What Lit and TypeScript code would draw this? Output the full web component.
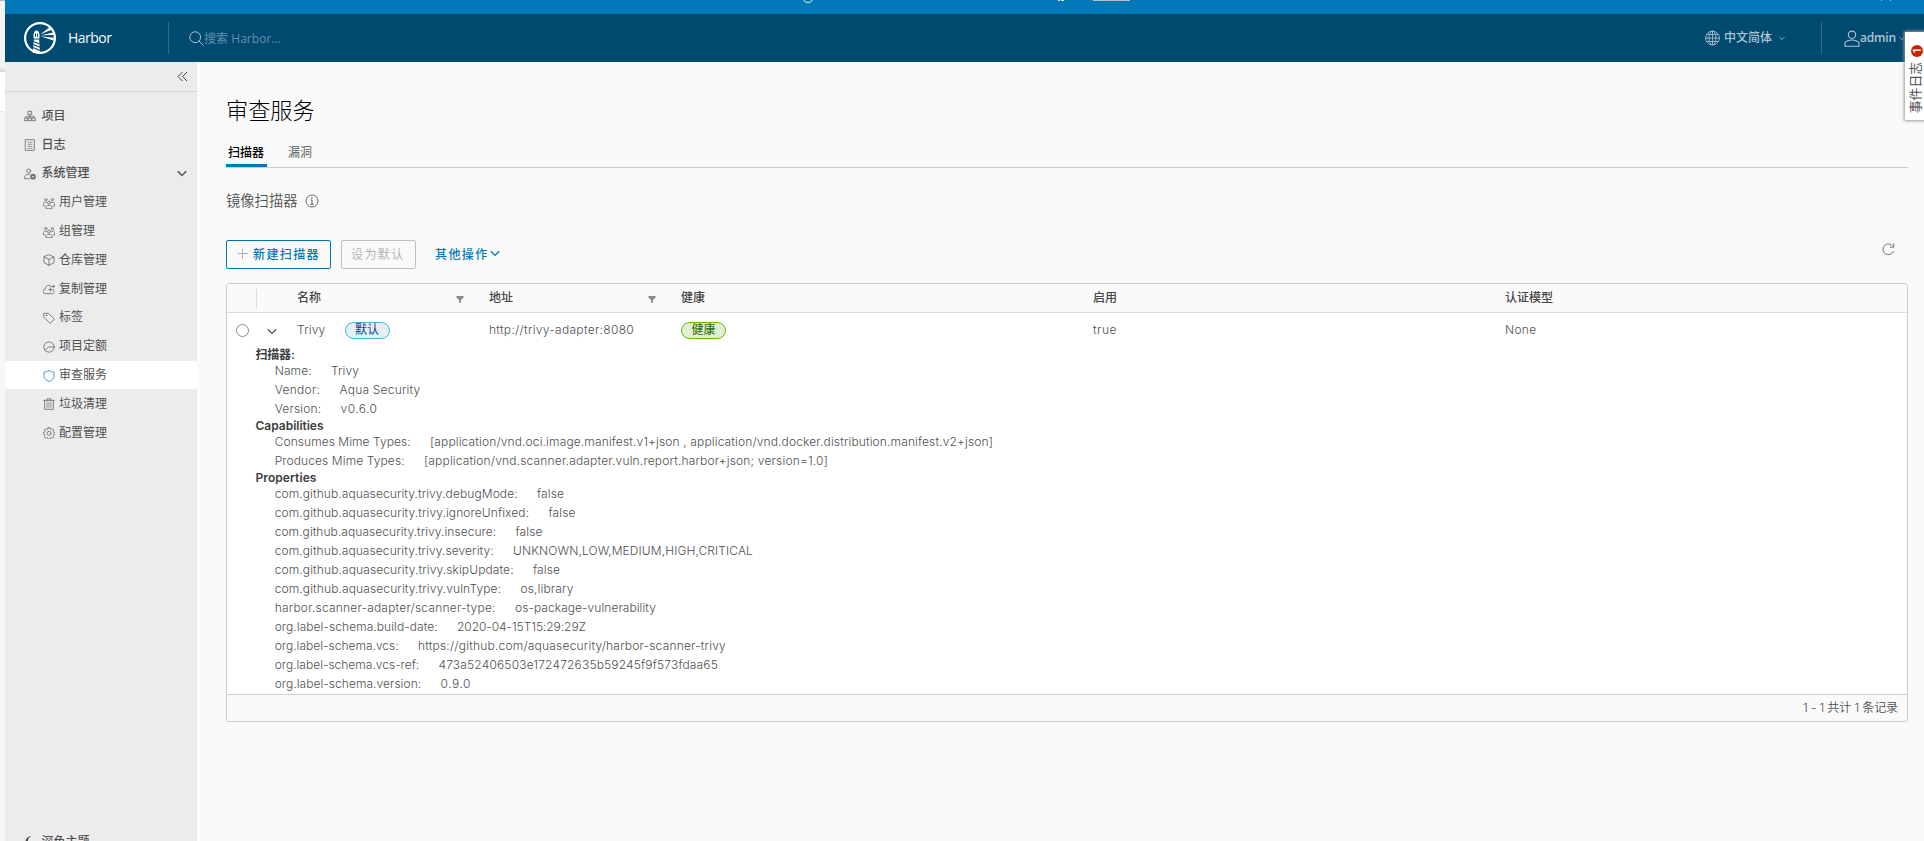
import { LitElement, html, css, svg } from "lit";
import { customElement, property } from "lit/decorators.js";

/** A single line of text whose tracking is tuned to a given advance width. */
@customElement("fit-text")
class FitText extends LitElement {
  @property({ type: Number }) w = 0;
  @property() text = "";
  static styles = css`
    :host { display: inline-block; white-space: pre; flex: none; }
    span { display: inline-block; }
  `;
  async firstUpdated() {
    await document.fonts.ready;
    const s = this.renderRoot.querySelector("span") as HTMLElement;
    const n = this.text.length;
    const natural = s.getBoundingClientRect().width;
    if (this.w && n) s.style.letterSpacing = (this.w - natural) / n + "px";
    if (this.w) this.style.width = this.w + "px";
  }
  render() {
    return html`<span>${this.text}</span>`;
  }
}

const icon = (body: unknown, size = 12) =>
  html`<svg width=${size} height=${size} viewBox="0 0 36 36" fill="none" stroke="currentColor" stroke-width="2.600" stroke-linejoin="round" stroke-linecap="round">${body}</svg>`;

const icons: Record<string, unknown> = {
  org: svg`<path d="M13 4h10v9H13zM2 24h9v8H2zM25 24h9v8h-9zM13.500 24h9v8h-9zM18 13v11M6 24v-5h24v5"/>`,
  log: svg`<path d="M5 2h26v32H5z"/><path d="M12 10h12M12 16h12M12 22h12M12 28h12" stroke-width="2"/>`,
  admin: svg`<circle cx="14" cy="9" r="6"/><path d="M16 32H2v-7c3-5 8-6 14-6"/><circle cx="27" cy="26" r="5.500" stroke-width="6"/>`,
  users: svg`<circle cx="18" cy="17" r="4.500"/><path d="M9 34v-5c2-3 5-4 9-4s7 1 9 4v5z"/><circle cx="8" cy="8" r="3.500"/><circle cx="28" cy="8" r="3.500"/><path d="M5 27H1v-8c2-3 5-4 9-3M31 27h4v-8c-2-3-5-4-9-3"/>`,
  box: svg`<path d="M18 2.500l15 6.500v17l-15 8-15-8V9zM3 9l15 7 15-7M18 16v18"/>`,
  cloud: svg`<path d="M24 10A10 10 0 0 0 7 18a7 7 0 0 0 1 14h20a6 6 0 0 0 5-8M17 20h14M22 15v10M24 10h11M31 6l4 4-4 4"/>`,
  tag: svg`<path d="M3 4h13l18 17-12 13L3 16z"/><circle cx="10" cy="10" r="1.500"/>`,
  quota: svg`<circle cx="18" cy="18" r="15.500"/><path d="M6 28l11-10h16"/>`,
  shield: svg`<path d="M18 1c4 4 9 5 15 5v12c0 8-7 13-15 17C10 31 3 26 3 18V6c6 0 11-1 15-5z"/>`,
  trash: svg`<path d="M2 7h32M12 7V2.500h12V7M5 7v27h26V7"/><path d="M12 12v17M18 12v17M24 12v17" stroke-width="2"/>`,
  cog: svg`<path d="M15.200 2h5.600l1 4.300 3 1.200 3.700-2.300 4 4-2.300 3.700 1.200 3 4.300 1v5l-4.300 1-1.200 3 2.300 3.700-4 4-3.700-2.300-3 1.200-1 4.300h-5.600l-1-4.300-3-1.200-3.700 2.300-4-4 2.300-3.700-1.200-3-4.300-1v-5l4.300-1 1.200-3-2.300-3.700 4-4 3.700 2.300 3-1.200z"/><circle cx="18" cy="19" r="6"/>`,
};

const nav: { t: string; i: string; sub?: boolean; active?: boolean; open?: boolean }[] = [
  { t: "项目", i: "org" },
  { t: "日志", i: "log" },
  { t: "系统管理", i: "admin", open: true },
  { t: "用户管理", i: "users", sub: true },
  { t: "组管理", i: "users", sub: true },
  { t: "仓库管理", i: "box", sub: true },
  { t: "复制管理", i: "cloud", sub: true },
  { t: "标签", i: "tag", sub: true },
  { t: "项目定额", i: "quota", sub: true },
  { t: "审查服务", i: "shield", sub: true, active: true },
  { t: "垃圾清理", i: "trash", sub: true },
  { t: "配置管理", i: "cog", sub: true },
];

type Row = [string, number, string, number];
const sections: { title: string; w: number; rows: Row[] }[] = [
  { title: "扫描器:", w: 39, rows: [
    ["Name:", 37, "Trivy", 28],
    ["Vendor:", 45.5, "Aqua Security", 81],
    ["Version:", 46.5, "v0.6.0", 37],
  ] },
  { title: "Capabilities", w: 68, rows: [
    ["Consumes Mime Types:", 136, "[application/vnd.oci.image.manifest.v1+json , application/vnd.docker.distribution.manifest.v2+json]", 563],
    ["Produces Mime Types:", 130, "[application/vnd.scanner.adapter.vuln.report.harbor+json; version=1.0]", 404],
  ] },
  { title: "Properties", w: 61, rows: [
    ["com.github.aquasecurity.trivy.debugMode:", 243, "false", 27],
    ["com.github.aquasecurity.trivy.ignoreUnfixed:", 254.5, "false", 27],
    ["com.github.aquasecurity.trivy.insecure:", 221.5, "false", 27],
    ["com.github.aquasecurity.trivy.severity:", 219, "UNKNOWN,LOW,MEDIUM,HIGH,CRITICAL", 240],
    ["com.github.aquasecurity.trivy.skipUpdate:", 239, "false", 27],
    ["com.github.aquasecurity.trivy.vulnType:", 226.5, "os,library", 53],
    ["harbor.scanner-adapter/scanner-type:", 221, "os-package-vulnerability", 141],
    ["org.label-schema.build-date:", 163, "2020-04-15T15:29:29Z", 129],
    ["org.label-schema.vcs:", 124, "https://github.com/aquasecurity/harbor-scanner-trivy", 308],
    ["org.label-schema.vcs-ref:", 144.5, "473a52406503e172472635b59245f9f573fdaa65", 279.5],
    ["org.label-schema.version:", 146.5, "0.9.0", 30.5],
  ] },
];

@customElement("app-root")
class AppRoot extends LitElement {
  static styles = css`
    :host { display: flex; height: 841px; width: 1924px; overflow: hidden; position: relative; background: #fafafa;
      font: 350 12px/18px Inter, "Noto Sans CJK SC", sans-serif; color: #505050; }
    * { box-sizing: border-box; }
    svg { display: block; flex: none; }
    .edge { width: 5px; flex: none; display: flex; flex-direction: column; background: #f6f6f6; }
    .edge .a { height: 1px; background: #b5b5b5; }
    .edge .b { height: 71px; background: linear-gradient(#f3f3f3 92%, #d4d4d4); }
    .edge .c { height: 40px; background: #fff; border-bottom: 1px solid #e8e8e8; }
    .app { flex: 1; display: flex; flex-direction: column; min-width: 0; }
    .banner { height: 14px; flex: none; background: #0079b8; display: flex; overflow: hidden; }
    .ring { width: 12px; height: 12px; margin: -9px 0 0 797px; border: 1px solid #e8f4fb; border-radius: 50%; }
    .bit { width: 6px; height: 1px; margin-left: 244px; border-left: 2px solid #cbe4f2; border-right: 3px solid #fff; }
    .under { width: 37px; height: 1px; margin-left: 29px; background: #b6bcc0; }
    .bit2 { width: 10px; height: 1px; margin-left: 751px; border-left: 1px solid #9bcbe5; border-right: 1px solid #9bcbe5; }
    .head { height: 48px; flex: none; background: #004a70; color: #afc4d1; display: flex; align-items: center; font-family: "Open Sans", "Noto Sans CJK SC", sans-serif; }
    .logo { margin-left: 19px; }
    .brand { color: #fafafa; font-size: 14px; margin-left: 12px; width: 100px; margin-top: -1px; font-weight: 400; }
    .div { width: 1px; height: 32px; background: #2f6d8e; }
    .mag { margin-left: 20px; }
    .search { color: #6190a9; margin: 1px 0 0; font-weight: 400; }
    .grow { flex: 1; }
    .lang { margin: -1px 7px 0 4px; font-weight: 500; font-size: 12px; }
    .ldiv { margin: 0 22px 0 36px; }
    .adm { font-weight: 600; margin: -1px 3px 0 0; }
    .tail { margin-right: 19px; }
    .main { flex: 1; display: flex; min-height: 0; }
    .side { width: 192px; flex: none; background: #ececec; display: flex; flex-direction: column; overflow: hidden; }
    .fold { height: 30px; flex: none; border-bottom: 1px solid #d6d6d6; display: flex; justify-content: flex-end; padding: 9px 9px 0 0; }
    .nav { padding-top: 9.500px; height: 735.500px; flex: none; }
    .item { height: 28.8px; flex: none; display: flex; align-items: center; padding-left: 19px; gap: 6px; font-weight: 500; color: #505050; }
    .item svg { color: #707070; margin-top: 1px; }
    .item .t { flex: 1; margin-left: -0.500px; }
    .item .chev { margin-right: 10px; color: #444; }
    .sub { padding-left: 37.500px; font-weight: 400; gap: 5px; }
    .active { background: #fff; border-radius: 3px; }
    .active svg { color: #3492c6; }
    .content { flex: 1; display: flex; flex-direction: column; padding: 29px 16px 0 29px; min-width: 0; }
    h1 { margin: 0; font: 300 22.200px/36px "Noto Sans CJK SC", sans-serif; color: #000; }
    .tabs { display: flex; height: 30px; margin-top: 11px; border-bottom: 1px solid #ccc; }
    .tab { padding: 6px 2px 0; height: 29px; margin-right: 19px; color: #565656; }
    .tab.on { color: #000; font-weight: 500; width: 41px; border-bottom: 3px solid #0079b8; }
    .sub-h { display: flex; align-items: center; height: 20px; margin-top: 23px; font-size: 14.300px; gap: 8px; font-weight: 350; }
    .bar { display: flex; align-items: center; height: 29px; margin-top: 29px; letter-spacing: 1.400px; }
    .btn { height: 29px; border: 1px solid #0079b8; color: #0079b8; border-radius: 2px; display: flex; align-items: center; font-weight: 500; }
    .new { width: 105px; padding-left: 11px; gap: 5px; }
    .new svg { margin-top: -2px; }
    .dis { width: 75px; margin-left: 10px; border-color: #c1c1c1; color: #b4b4b4; padding-left: 9px; font-weight: 400; }
    .more { color: #0079b8; margin-left: 19px; font-weight: 500; display: flex; align-items: center; gap: 1.500px; }
    .more svg { margin-top: -2px; }
    .bar .ref { margin: -10px 13px 0 0; color: #737373; }
    .table { margin-top: 14px; border: 1px solid #ccc; border-radius: 3px; height: 439px; background: #fff; display: flex; flex-direction: column; }
    .r { display: grid; grid-template-columns: 29px 41px 192px 192px 412px 412px 1fr; align-items: center; flex: none; }
    .th { height: 29px; background: #fafafa; border-bottom: 1px solid #ddd; font-weight: 500; color: #454545; border-radius: 3px 3px 0 0; }
    .sep { height: 19px; border-right: 1px solid #ddd; width: 30px; }
    .col { display: flex; align-items: center; justify-content: space-between; }
    .col svg { margin: 2px 25px 0 0; }
    .tr { height: 34px; }
    .radio { width: 13px; height: 13px; border: 1px solid #8c8c8c; border-radius: 50%; margin: 1px 0 0 9px; }
    .tr .chev { margin: 2px 0 0 11px; }
    .tag { height: 17px; width: 45px; margin-top: 1px; border: 1px solid #49afd9; background: #e1f1f6; color: #004d8a; border-radius: 9px; line-height: 14px; text-align: center; font-weight: 400; }
    .ok { background: #dff0d0; border-color: #60b515; color: #266900; }
    .name { display: flex; align-items: center; gap: 19px; }
    .detail { flex: 1; min-height: 0; padding-left: 28.500px; }
    .title { font-weight: 600; color: #3d3d3d; height: 14px; line-height: 15px; display: flex; }
    .rows { padding: 0 0 0 19.200px; }
    .kv { display: flex; height: 19px; line-height: 19px; gap: 19.300px; }
    .foot { height: 27px; flex: none; border-top: 1px solid #ccc; background: #fafafa; border-radius: 0 0 3px 3px; display: flex; align-items: center; justify-content: flex-end; padding-right: 9px; }
    .event { position: absolute; left: 1905px; top: 32px; width: 24px; height: 88px; background: #fff; box-shadow: 0 0 3px 1px #999; display: flex; flex-direction: column; align-items: flex-start; padding: 13px 0 0 6px; gap: 5px; }
    .event div { writing-mode: vertical-rl; text-orientation: sideways; transform: rotate(180deg); }
    .event .badge { width: 12px; height: 12px; border-radius: 50%; background: #c92100; color: #fff; font-weight: 600; font-size: 10px; line-height: 12px; text-align: center; }
    .event .n { width: 14px; line-height: 14px; font-size: 12.800px; margin-left: -2px; font-weight: 400; }
  `;

  chev(w: number, cls = "chev") {
    return html`<svg class=${cls} width=${w} height="7" viewBox="0 0 10 7" fill="none" stroke="currentColor" stroke-width="1.300"><path d="M.8 1.200L5 5.400 9.200 1.200"/></svg>`;
  }
  filter() {
    return html`<svg width="8" height="7" viewBox="0 0 8 7" fill="#8c8c8c"><path d="M.5 0h7v1.800L5 4v2.800H3V4L.5 1.800z"/></svg>`;
  }

  render() {
    return html`
      <div class="edge"><div class="a"></div><div class="b"></div><div class="c"></div></div>
      <div class="app">
        <div class="banner"><div class="ring"></div><div class="bit"></div><div class="under"></div><div class="bit2"></div></div>
        <div class="head">
          <svg class="logo" width="32" height="32" viewBox="0 0 32 32">
            <circle cx="16" cy="16" r="14.900" fill="none" stroke="#fff" stroke-width="2.200"/>
            <path fill="#fff" d="M9.500 12.500l.8-2.800 2.200-1.700 2.200 1.700.8 2.800v4h-6z"/>
            <path fill="#004a70" d="M11 11.500h1v3.300h-1zM13 11.500h1v3.300h-1z"/>
            <path fill="#fff" d="M9.900 17.500h5.200l1 13.500H8.700z"/>
            <path stroke="#004a70" stroke-width="1.100" d="M9.500 19.500l6 2.500M9 22.500l7 2.800M9 25.500l7 3"/>
            <path fill="#fff" d="M16.500 12.300l9-7 2.200 2.400zM16.500 13.200l13-2.800.5 2.600zM16.500 14.200l13.500 1.600-.6 2.700z"/>
          </svg>
          <div class="brand"><fit-text w="43.500" text="Harbor"></fit-text></div>
          <div class="div"></div>
          <svg class="mag" width="15" height="15" viewBox="0 0 15 15" fill="none" stroke="currentColor" stroke-width="1"><circle cx="6.200" cy="6.200" r="5.400"/><path d="M10.200 10.200l4.300 4.300"/></svg>
          <div class="search"><fit-text w="77" text="搜索 Harbor..."></fit-text></div>
          <div class="grow"></div>
          <svg width="15" height="16" viewBox="0 0 16 16" fill="none" stroke="currentColor" stroke-width=".9"><circle cx="8" cy="8" r="7.400"/><ellipse cx="8" cy="8" rx="3.700" ry="7.400"/><path d="M8 .8v14.400M.8 8h14.400M2 4.300h12M2 11.700h12"/></svg>
          <div class="lang">中文简体</div>
          ${this.chev(6)}
          <div class="div ldiv"></div>
          <svg width="16" height="17" viewBox="0 0 16 17" fill="none" stroke="currentColor" stroke-width="1.100"><circle cx="8" cy="4.800" r="3.700"/><path d="M1 16.300v-3.500c1.500-2.200 4-2.800 7-2.800s5.500.6 7 2.800v3.500z"/></svg>
          <div class="adm"><fit-text w="36" text="admin"></fit-text></div>
          ${this.chev(6, "tail")}
        </div>
        <div class="main">
          <div class="side">
            <div class="fold"><svg width="11" height="11" viewBox="0 0 11 11" fill="none" stroke="#444"><path d="M5.500 1L1 5.500 5.500 10M10 1L5.500 5.500 10 10"/></svg></div>
            <div class="nav">
              ${nav.map((n) => html`<div class="item ${n.sub ? "sub" : ""} ${n.active ? "active" : ""}">
                ${icon(icons[n.i])}<div class="t">${n.t}</div>${n.open ? this.chev(10) : ""}
              </div>`)}
            </div>
            <div class="item"><svg width="12" height="12" viewBox="0 0 12 12" fill="#444"><path d="M7.500 0a6.500 6.500 0 0 0 .5 12A6 6 0 0 1 1.500 6a6 6 0 0 1 6-6z"/></svg><div class="t">深色主题</div></div>
          </div>
          <div class="content">
            <h1>审查服务</h1>
            <div class="tabs"><div class="tab on">扫描器</div><div class="tab">漏洞</div></div>
            <div class="sub-h"><span>镜像扫描器</span>
              <svg width="14" height="14" viewBox="0 0 14 14" fill="none" stroke="#666"><circle cx="7" cy="7" r="6"/><path d="M5.500 6H7v4.300M5.300 10.300h3.500"/><circle cx="6.900" cy="3.900" r=".5"/></svg></div>
            <div class="bar">
              <div class="btn new"><svg width="10" height="10" viewBox="0 0 10 10" stroke="#b0b0b0"><path d="M4.500 0v10M0 4.500h10"/></svg>新建扫描器</div>
              <div class="btn dis">设为默认</div>
              <div class="more">其他操作${this.chev(10)}</div>
              <div class="grow"></div>
              <svg class="ref" width="13" height="13" viewBox="0 0 13 13" fill="none" stroke="currentColor"><path d="M11.500 8A5.400 5.400 0 1 1 11 3.500M11.800.5v3.700H8"/></svg>
            </div>
            <div class="table">
              <div class="r th">
                <div class="sep"></div><div></div>
                <div class="col">名称${this.filter()}</div><div class="col">地址${this.filter()}</div>
                <div>健康</div><div>启用</div><div>认证模型</div>
              </div>
              <div class="r tr">
                <div class="radio"></div><div>${this.chev(10)}</div>
                <div class="name"><fit-text w="28.500" text="Trivy"></fit-text><div class="tag">默认</div></div>
                <div><fit-text w="145" text="http://trivy-adapter:8080"></fit-text></div>
                <div><div class="tag ok">健康</div></div>
                <div><fit-text w="24" text="true"></fit-text></div>
                <div><fit-text w="31.500" text="None"></fit-text></div>
              </div>
              <div class="detail">
                ${sections.map((s) => html`
                  <div class="title"><fit-text w=${s.w} text=${s.title}></fit-text></div>
                  <div class="rows">${s.rows.map(([k, kw, v, vw]) => html`
                    <div class="kv"><fit-text w=${kw} text=${k}></fit-text><fit-text w=${vw} text=${v}></fit-text></div>`)}
                  </div>`)}
              </div>
              <div class="foot"><fit-text w="95" text="1 - 1 共计 1 条记录"></fit-text></div>
            </div>
          </div>
        </div>
      </div>
      <div class="event"><div class="badge">1</div><div class="n">事件日志</div></div>
    `;
  }
}
